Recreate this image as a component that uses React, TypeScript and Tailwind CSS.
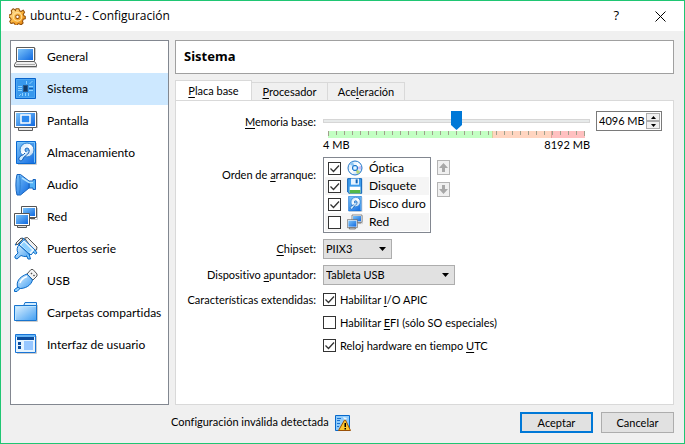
import { useState } from 'react'
import type { ReactNode } from 'react'

const Gradients = () => (
  <svg className="absolute h-0 w-0" aria-hidden="true">
    <defs>
      <linearGradient id="screen" x1="0" y1="0" x2="1" y2="1">
        <stop offset="0" stopColor="#7cc4fa" />
        <stop offset="1" stopColor="#1069e0" />
      </linearGradient>
      <linearGradient id="sky" x1="0" y1="0" x2="1" y2="1">
        <stop offset="0" stopColor="#e2f4ff" />
        <stop offset="1" stopColor="#3f9df2" />
      </linearGradient>
      <linearGradient id="gold" x1="0" y1="0" x2="1" y2="1">
        <stop offset="0" stopColor="#fff0b8" />
        <stop offset="0.5" stopColor="#fcb53c" />
        <stop offset="1" stopColor="#e07c08" />
      </linearGradient>
      <linearGradient id="disc" x1="0" y1="0" x2="1" y2="1">
        <stop offset="0" stopColor="#c4e0f8" />
        <stop offset="0.5" stopColor="#ffffff" />
        <stop offset="1" stopColor="#a2c8ee" />
      </linearGradient>
    </defs>
  </svg>
)

const Svg = ({ size = 24, children }: { size?: number; children: ReactNode }) => (
  <svg width={size} height={size} viewBox="0 0 24 24" className="shrink-0" aria-hidden="true">
    {children}
  </svg>
)

const MachineIcon = () => (
  <Svg>
    <path d="M2.500 16V2.500h18V16" fill="#fff" stroke="#5c5c5c" />
    <path d="M4 4h15v11H4z" fill="url(#screen)" />
    <path d="M2.500 16.500h18l2 3v2H.500v-2z" fill="#eee" stroke="#5c5c5c" />
    <path d="M2 19.500h19" stroke="#aaa" />
    <path d="M21.500 3v12M1 22.500h22" stroke="#ccc" />
  </Svg>
)

const ChipIcon = () => (
  <Svg>
    <path d="M1.500 1.500h20v20h-20z" fill="#3798ed" stroke="#0863cb" />
    <path d="M2.500 2.500h18v18h-18z" fill="none" stroke="#4ba6f2" />
    <path d="M9 8h5v7H9z" fill="#2a5a8c" />
    <path d="M10 9h3v5h-3z" fill="#123a66" />
    <path
      d="M4 9.500h4M4 11.500h4M4 13.500h4M15 9.500h4M15 13.500h4M8.500 16v3M11.500 16v3M14.500 16v3M12.500 4v3M15.500 7l3-3M5 19l2-2"
      stroke="#8bd0ff"
    />
    <path d="M15 11.500h4" stroke="#1360b4" />
  </Svg>
)

const DisplayIcon = () => (
  <Svg>
    <path d="M.500 2.500h22v16H.500z" fill="#fff" stroke="#5c5c5c" />
    <path d="M2 4h19v13H2z" fill="url(#screen)" />
    <path d="M7 6h9v8H7z" fill="#2b89ef" stroke="#fff" strokeWidth="1.500" />
    <path d="M4.500 18.500h14v3h-14z" fill="#e8e8e8" stroke="#5c5c5c" />
    <path d="M23.500 4v15" stroke="#ccc" />
  </Svg>
)

const DiskIcon = ({ size = 24 }: { size?: number }) => (
  <Svg size={size}>
    <path d="M2.500.500h19v22h-19z" fill="url(#screen)" stroke="#0969d1" />
    <path d="M3.500 1.500h17v20" fill="none" stroke="#7cc8fc" />
    <circle cx="13" cy="9" r="7" fill="url(#disc)" stroke="#2b7fd2" />
    <circle cx="13" cy="9" r="2" fill="#6ab4f0" stroke="#1d65bd" />
    <path d="M15 9c1 5-5 5-6 9-1 3-5 2-4-1 1-3 4-2 6-5" fill="#cdeaff" stroke="#0c56b0" />
    <path d="M22.500 2v21.500H4" fill="none" stroke="#ccc" />
  </Svg>
)

const AudioIcon = () => (
  <Svg>
    <path d="M15 8h4V6.500h2.500v10H19V15h-4z" fill="#53b1f6" stroke="#1763bd" />
    <path d="M3 1.500h3.500L15 8v7l-8.500 7H3c-1.500-5-1.500-15 0-20.500z" fill="url(#screen)" stroke="#1763bd" />
    <path d="M5.500 2.500c1 5 1 13 0 18" fill="none" stroke="#2b7fd2" />
    <path d="M8 5l7 4.500h4" fill="none" stroke="#aee2ff" strokeWidth="1.500" />
  </Svg>
)

const NetworkIcon = ({ size = 24 }: { size?: number }) => (
  <Svg size={size}>
    <path d="M17 14.500h6.500V3" fill="none" stroke="#ccc" />
    <path d="M7.500 1.500h15v11h-15z" fill="#fff" stroke="#555" />
    <path d="M9 3h12v8H9z" fill="url(#screen)" />
    <path d="M16 13.500h5" stroke="#555" />
    <path d="M.500 8.500h15v12H.500z" fill="#fff" stroke="#555" />
    <path d="M2 10h12v9H2z" fill="url(#screen)" />
    <path d="M3.500 20.500h9v2h-9z" fill="#ddd" stroke="#555" />
  </Svg>
)

const SerialIcon = () => (
  <Svg>
    <path d="M5 7l-4 1 5-6 3-1 2 2z" fill="#7cc7fb" stroke="#0868c6" />
    <path d="M10.500 1l3-.500 9.500 9.500-.500 3-3 .500z" fill="#f0f0f0" stroke="#555" strokeLinejoin="round" />
    <path d="M5 8l5-5.500L21 13l-4 5z" fill="#e8f6ff" stroke="#0868c6" strokeLinejoin="round" />
    <path d="M5 8l11 10c-2 2-6 2-9 .500L3 22l-2-1v-2l3-3C2.500 13 3 10 5 8z" fill="url(#sky)" stroke="#0868c6" strokeLinejoin="round" />
    <path d="M7 8l3-3 8 8-3 3z" fill="#8dd0ff" />
    <path d="M15 17l1.500 5H14l-1.500-3.500M21 13l2 3-1.500 1-2.500-2" fill="#7cc7fb" stroke="#0868c6" />
    <path d="M2 6l5-5 2 1-6 6z" fill="#e8e8e8" stroke="#555" />
  </Svg>
)

const UsbIcon = () => (
  <Svg>
    <path d="M13 5l4-4.500h2L23 5v2l-4 4z" fill="#f4f4f4" stroke="#555" strokeLinejoin="round" />
    <path d="M17 5l1-1M19.500 7l1-1" stroke="#555" strokeWidth="1.500" />
    <path d="M4 19.500C1.500 13 5 8 13 5l5.500 6c-1.500 5.500-7 9-14.500 8.500z" fill="url(#sky)" stroke="#0868c6" />
    <path d="M4 18l-3.500 2.500v2h2.500l3-3z" fill="#8dd1ff" stroke="#0868c6" />
    <path d="M6 14c1-3 3-5 7-6.500" fill="none" stroke="#fff" strokeWidth="1.500" />
  </Svg>
)

const FolderIcon = () => (
  <Svg>
    <path d="M9.500 5l1.500-3.500h11.500V8" fill="#d2edff" stroke="#1874ce" />
    <path d="M.500 4.500h22v15H.500z" fill="url(#sky)" stroke="#1874ce" />
    <path d="M1.500 19V5.500H22" fill="none" stroke="#b9e4ff" />
    <path d="M23.500 4v16.500H2" fill="none" stroke="#ccc" />
  </Svg>
)

const InterfaceIcon = () => (
  <Svg>
    <path d="M1.500 1.500h20v18h-20z" fill="#e6f4ff" stroke="#1874d6" />
    <path d="M2 2h19v2H2z" fill="#65b4f5" />
    <path d="M3 4h17v3H3zM4 9h3v3H4zM4 13h3v3H4z" fill="#0b4b9c" />
    <path d="M10 8h9v9h-9z" fill="#98c7ff" />
    <path d="M22.500 3v17.500H3" fill="none" stroke="#ccc" />
  </Svg>
)

const OpticalIcon = () => (
  <Svg size={16}>
    <circle cx="12" cy="12" r="10.500" fill="url(#disc)" stroke="#2277c9" strokeWidth="1.500" />
    <path d="M12 12L4 6a10 10 0 0 1 5-3z" fill="#8ec6f4" />
    <path d="M12 12l8 6a10 10 0 0 1-5 3z" fill="#b6d67b" />
    <path d="M12 12l9-3v5z" fill="#ccb8f0" />
    <circle cx="12" cy="12" r="4" fill="#a3d4fa" stroke="#2277c9" strokeWidth="1.500" />
    <circle cx="12" cy="12" r="1.500" fill="#fff" />
  </Svg>
)

const FloppyIcon = () => (
  <Svg size={16}>
    <path d="M1 1h21v22H3l-2-2z" fill="#3d9cec" stroke="#0d62b8" strokeWidth="1.500" />
    <path d="M6 1h12v9H6z" fill="#e8f4ff" />
    <path d="M13 2h3v6h-3z" fill="#0d62b8" />
    <path d="M4 13h16v10H4z" fill="#fff" />
    <path d="M4 18h16v5H4z" fill="#54b948" />
  </Svg>
)

const GearIcon = () => (
  <Svg size={17}>
    <path
      d="M9 4l1-3h4l1 3 2 1 3-2 2 3-2 3 1 2 2 1v3l-3 1-1 3 1 2-3 3-3-2-2 1-1 2H9l-1-3-2-1-3 1-2-3 2-3-1-2-2-1v-3l3-1 1-3-1-2 3-3 3 2z"
      fill="url(#gold)"
      stroke="#97530c"
      strokeWidth="1.500"
      strokeLinejoin="round"
    />
    <circle cx="12" cy="12.500" r="6" fill="none" stroke="#ffe09a" strokeWidth="1.500" />
    <circle cx="12" cy="12.500" r="2.500" fill="#fff" stroke="#97530c" strokeWidth="1.500" />
  </Svg>
)

const WarningIcon = () => (
  <svg width="16" height="16" viewBox="0 0 16 16" className="shrink-0" role="img" aria-label="Aviso">
    <path d="M.500.500h14v15H.500z" fill="#8ecbfb" stroke="#0768cb" />
    <path d="M2 3.500h4M2 5.500h3M2 8.500h3M2 11.500h2" stroke="#1c72d0" />
    <path d="M8 2l4 1-2 3z" fill="#e8f6ff" />
    <path d="M9.500 5h1l5 10.500h-12z" fill="#fcc62d" stroke="#9a5108" />
    <path d="M9.500 8h1.500v4H9.500zM9.500 13h1.500v1.500H9.500z" fill="#000" />
  </svg>
)

const sections = [
  { name: 'General', Icon: MachineIcon },
  { name: 'Sistema', Icon: ChipIcon },
  { name: 'Pantalla', Icon: DisplayIcon },
  { name: 'Almacenamiento', Icon: DiskIcon },
  { name: 'Audio', Icon: AudioIcon },
  { name: 'Red', Icon: NetworkIcon },
  { name: 'Puertos serie', Icon: SerialIcon },
  { name: 'USB', Icon: UsbIcon },
  { name: 'Carpetas compartidas', Icon: FolderIcon },
  { name: 'Interfaz de usuario', Icon: InterfaceIcon },
]

const bootDevices = [
  { name: 'Óptica', icon: <OpticalIcon />, enabled: true },
  { name: 'Disquete', icon: <FloppyIcon />, enabled: true },
  { name: 'Disco duro', icon: <DiskIcon size={16} />, enabled: true },
  { name: 'Red', icon: <NetworkIcon size={16} />, enabled: false },
]

const Key = ({ children }: { children: string }) => (
  <span className="underline decoration-1 underline-offset-2">{children}</span>
)

const Check = ({ id, checked }: { id: string; checked: boolean }) => (
  <span className="grid shrink-0">
    <input
      id={id}
      type="checkbox"
      defaultChecked={checked}
      className="peer col-start-1 row-start-1 h-[13px] w-[13px] appearance-none border border-[#333] bg-white"
    />
    <svg
      viewBox="0 0 13 13"
      className="pointer-events-none invisible col-start-1 row-start-1 h-[13px] w-[13px] peer-checked:visible"
      aria-hidden="true"
    >
      <path d="M2.500 6.500l3 3 5.500-6" fill="none" stroke="#333" strokeWidth="1.300" />
    </svg>
  </span>
)

const MoveButton = ({ label, down }: { label: string; down?: boolean }) => (
  <button
    type="button"
    disabled
    aria-label={label}
    className="grid h-[15px] w-[13px] place-items-center border border-[#b4b4b4] bg-[#f0f0f0]"
  >
    <svg width="9" height="9" viewBox="0 0 9 9" className={down ? 'rotate-180' : ''} aria-hidden="true">
      <path d="M4.500 0L9 5H6v4H3V5H0z" fill="#a8a8a8" />
    </svg>
  </button>
)

const Select = ({ id, options, width }: { id: string; options: string[]; width: string }) => (
  <span className={`grid h-5 ${width}`}>
    <select
      id={id}
      className="col-start-1 row-start-1 appearance-none border border-[#adadad] bg-[#e1e1e1] pl-[2px] leading-4"
    >
      {options.map((option) => (
        <option key={option}>{option}</option>
      ))}
    </select>
    <svg
      width="7"
      height="4"
      viewBox="0 0 7 4"
      className="pointer-events-none col-start-1 row-start-1 mr-[6px] self-center justify-self-end"
      aria-hidden="true"
    >
      <path d="M0 0h7L3.500 4z" />
    </svg>
  </span>
)

const Tabs = () => (
  <div role="tablist" className="-mb-px flex items-end">
    <button
      role="tab"
      aria-selected="true"
      className="h-[21px] w-[77px] border border-b-0 border-[#d9d9d9] bg-white leading-4"
    >
      <Key>P</Key>laca base
    </button>
    <button
      role="tab"
      aria-selected="false"
      className="h-[19px] w-[76px] border border-l-0 border-[#d9d9d9] bg-[#f0f0f0] leading-4"
    >
      <Key>P</Key>rocesador
    </button>
    <button
      role="tab"
      aria-selected="false"
      className="h-[19px] w-[77px] border border-l-0 border-[#d9d9d9] bg-[#f0f0f0] leading-4"
    >
      Ace<Key>l</Key>eración
    </button>
  </div>
)

const MemorySlider = () => {
  const [memory, setMemory] = useState(4096)
  const step = (amount: number) => setMemory(Math.min(8192, Math.max(4, memory + amount)))
  return (
    <div className="flex items-start gap-[6px]">
      <div className="flex-1">
        <input
          id="memory"
          type="range"
          min={0}
          max={8192}
          value={memory}
          onChange={(event) => setMemory(Number(event.target.value))}
          className="block h-5 w-full appearance-none bg-transparent [&::-webkit-slider-runnable-track]:h-1 [&::-webkit-slider-runnable-track]:border [&::-webkit-slider-runnable-track]:border-[#d6d6d6] [&::-webkit-slider-runnable-track]:bg-[#e7eaea] [&::-webkit-slider-thumb]:-mt-[9px] [&::-webkit-slider-thumb]:h-[19px] [&::-webkit-slider-thumb]:w-[11px] [&::-webkit-slider-thumb]:appearance-none [&::-webkit-slider-thumb]:bg-[#0078d7] [&::-webkit-slider-thumb]:[clip-path:polygon(0_0,100%_0,100%_74%,50%_100%,0_74%)]"
        />
        <svg
          viewBox="0 0 257 7"
          preserveAspectRatio="none"
          className="mx-[5px] block h-[7px] w-[calc(100%-10px)]"
          aria-hidden="true"
        >
          <path d="M0 0h164v7H0z" fill="#c3ffc3" />
          <path d="M164 0h59v7h-59z" fill="#ffd5c0" />
          <path d="M223 0h34v7h-34z" fill="#ffc0c0" />
          <path d="M164.500 0v7" stroke="#d8cf98" />
          <path d="M223.500 0v7" stroke="#e5a09c" />
          {Array.from({ length: 33 }, (_, i) => (
            <path key={i} d={`M${i * 8 + 0.5} 0v${i === 0 || i === 32 ? 5 : 4}`} stroke="#a0a08c" />
          ))}
        </svg>
        <div className="flex h-[13px] items-center justify-between leading-[13px]">
          <span>4 MB</span>
          <span>8192 MB</span>
        </div>
      </div>
      <div className="flex h-5 w-[66px] border border-[#7a7a7a] bg-white p-px">
        <input
          type="text"
          aria-label="Memoria base en MB"
          readOnly
          value={`${memory} MB`}
          className="w-0 min-w-0 flex-1 pl-px leading-4 outline-none"
        />
        <div className="grid w-[14px] grid-rows-2">
          <button
            type="button"
            aria-label="Aumentar"
            onClick={() => step(4)}
            className="grid place-items-center border border-[#acacac] bg-[#f0f0f0]"
          >
            <svg width="5" height="3" viewBox="0 0 5 3" className="block">
              <path d="M0 3h5L2.500 0z" />
            </svg>
          </button>
          <button
            type="button"
            aria-label="Reducir"
            onClick={() => step(-4)}
            className="grid place-items-center border border-[#acacac] bg-[#f0f0f0]"
          >
            <svg width="5" height="3" viewBox="0 0 5 3" className="block">
              <path d="M0 0h5L2.500 3z" />
            </svg>
          </button>
        </div>
      </div>
    </div>
  )
}

const BootOrder = () => (
  <div className="flex gap-[6px]">
    <ul className="w-[108px] border border-[#828790] bg-white p-px text-[12px]">
      {bootDevices.map(({ name, icon, enabled }) => (
        <li key={name} className="even:bg-[#f5f5f5]">
          <label className="flex h-[18px] items-center gap-[6px] pl-[3px] leading-[18px] whitespace-nowrap">
            <Check id={`boot-${name}`} checked={enabled} />
            {icon}
            {name}
          </label>
        </li>
      ))}
    </ul>
    <div className="flex flex-col gap-[7px] pt-[3px]">
      <MoveButton label="Subir" />
      <MoveButton label="Bajar" down />
    </div>
  </div>
)

export default function App() {
  return (
    <div className="flex min-h-screen flex-col border border-[#1fc673] bg-[#f0f0f0] font-['Lato','Noto_Sans',sans-serif] text-[11px] text-black [font-variant-ligatures:none]">
      <Gradients />
      <header className="flex h-[30px] items-center bg-white pr-[18px] pl-2 font-['Open_Sans',sans-serif] text-[12px]">
        <GearIcon />
        <h1 className="ml-1 flex-1">ubuntu-2 - Configuración</h1>
        <button type="button" aria-label="Ayuda" className="mr-9 text-[13px]">
          ?
        </button>
        <button type="button" aria-label="Cerrar">
          <svg width="11" height="11" viewBox="0 0 11 11" className="block" aria-hidden="true">
            <path d="M.500.500l10 10M10.500.500l-10 10" stroke="#000" />
          </svg>
        </button>
      </header>

      <div className="flex flex-1 gap-[6px] pt-[9px] pr-[10px] pl-[9px]">
        <nav className="w-[159px] shrink-0 border border-[#828790] bg-white text-[12px]">
          {sections.map(({ name, Icon }) => (
            <a
              key={name}
              href="#"
              aria-current={name === 'Sistema' ? 'page' : undefined}
              className="flex h-8 items-center gap-[9px] pl-[3px] whitespace-nowrap aria-[current=page]:bg-[#cde8ff]"
            >
              <Icon />
              {name}
            </a>
          ))}
        </nav>

        <main className="flex min-w-0 flex-1 flex-col">
          <h2 className="mb-[6px] flex h-[34px] items-center border border-[#a0a0a0] bg-white px-2 font-['Noto_Sans',sans-serif] text-[13px] font-bold">
            Sistema
          </h2>
          <Tabs />
          <div
            role="tabpanel"
            className="grid flex-1 grid-cols-[140px_1fr] content-start gap-x-[7px] gap-y-[6px] border border-[#d9d9d9] bg-white pt-[10px] pr-[11px]"
          >
            <label htmlFor="memory" className="text-right leading-[21px] whitespace-nowrap">
              <Key>M</Key>emoria base:
            </label>
            <MemorySlider />

            <span className="pt-[10px] text-right leading-4 whitespace-nowrap">
              Orden de <Key>a</Key>rranque:
            </span>
            <BootOrder />

            <label htmlFor="chipset" className="text-right leading-5 whitespace-nowrap">
              <Key>C</Key>hipset:
            </label>
            <Select id="chipset" options={['PIIX3', 'ICH9']} width="w-[69px]" />

            <label htmlFor="pointer" className="text-right leading-5 whitespace-nowrap">
              Dispositivo <Key>a</Key>puntador:
            </label>
            <Select id="pointer" options={['Tableta USB', 'Ratón PS/2']} width="w-[132px]" />

            <span className="text-right leading-[17px] whitespace-nowrap">Características extendidas:</span>
            <div className="flex flex-col items-start gap-[6px] leading-[17px]">
              <label className="flex h-[17px] items-center gap-1">
                <Check id="ioapic" checked />
                <span>
                  Habilitar <Key>I</Key>/O APIC
                </span>
              </label>
              <label className="flex h-[17px] items-center gap-1">
                <Check id="efi" checked={false} />
                <span>
                  Habilitar <Key>E</Key>FI (sólo SO especiales)
                </span>
              </label>
              <label className="flex h-[17px] items-center gap-1">
                <Check id="utc" checked />
                <span>
                  Reloj hardware en tiempo <Key>U</Key>TC
                </span>
              </label>
            </div>
          </div>
        </main>
      </div>

      <footer className="flex items-center pt-[7px] pr-[10px] pb-[10px] pl-[170px]">
        <span>Configuración inválida detectada</span>
        <span className="ml-[6px]">
          <WarningIcon />
        </span>
        <div className="ml-auto flex gap-2">
          <button type="button" className="h-[21px] w-[73px] border-2 border-[#0078d7] bg-[#e1e1e1] leading-4">
            Aceptar
          </button>
          <button type="button" className="h-[21px] w-[73px] border border-[#adadad] bg-[#e1e1e1] leading-4">
            Cancelar
          </button>
        </div>
      </footer>
    </div>
  )
}
